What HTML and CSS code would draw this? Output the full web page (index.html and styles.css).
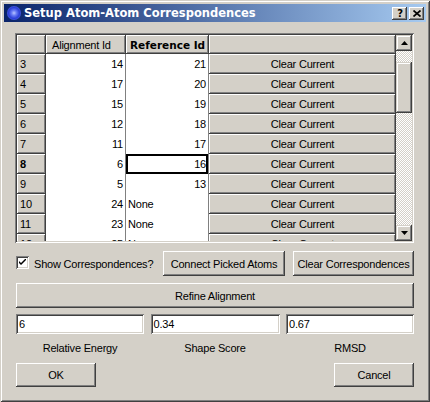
FILE: index.html
```html
<!DOCTYPE html>
<html>
<head>
<meta charset="utf-8">
<link rel="stylesheet" href="styles.css">
</head>
<body>
<div class="win">
  <div class="titlebar">
    <span class="ticon"></span>
    <span class="ttext">Setup Atom-Atom Correspondences</span>
    <span class="tbtns">
      <span class="tbtn help">?</span>
      <span class="tbtn close"><svg width="8" height="7" viewBox="0 0 8 7"><path d="M0.5 0.5 L7.5 6.5 M7.5 0.5 L0.5 6.5" stroke="#000" stroke-width="1.7" fill="none"/></svg></span>
    </span>
  </div>
  <div class="content">
    <div class="gridframe">
      <div class="table">
        <div class="row head">
          <div class="rh"></div>
          <div class="ch">Alignment Id</div>
          <div class="ch bold">Reference Id</div>
          <div class="ch"></div>
        </div>
        <div class="row"><div class="rh">3</div><div class="c num">14</div><div class="c num">21</div><div class="bc">Clear Current</div></div>
        <div class="row"><div class="rh">4</div><div class="c num">17</div><div class="c num">20</div><div class="bc">Clear Current</div></div>
        <div class="row"><div class="rh">5</div><div class="c num">15</div><div class="c num">19</div><div class="bc">Clear Current</div></div>
        <div class="row"><div class="rh">6</div><div class="c num">12</div><div class="c num">18</div><div class="bc">Clear Current</div></div>
        <div class="row"><div class="rh">7</div><div class="c num">11</div><div class="c num">17</div><div class="bc">Clear Current</div></div>
        <div class="row"><div class="rh bold">8</div><div class="c num">6</div><div class="c num sel">16</div><div class="bc">Clear Current</div></div>
        <div class="row"><div class="rh">9</div><div class="c num">5</div><div class="c num">13</div><div class="bc">Clear Current</div></div>
        <div class="row"><div class="rh">10</div><div class="c num">24</div><div class="c txt">None</div><div class="bc">Clear Current</div></div>
        <div class="row"><div class="rh">11</div><div class="c num">23</div><div class="c txt">None</div><div class="bc">Clear Current</div></div>
        <div class="row"><div class="rh">12</div><div class="c num">25</div><div class="c txt">None</div><div class="bc">Clear Current</div></div>
      </div>
      <div class="vscroll">
        <div class="sbtn"><svg width="7" height="4" viewBox="0 0 7 4"><polygon points="3.5,0 7,4 0,4" fill="#000"/></svg></div>
        <div class="gap1"></div>
        <div class="thumb"></div>
        <div class="gap2"></div>
        <div class="sbtn"><svg width="7" height="4" viewBox="0 0 7 4"><polygon points="0,0 7,0 3.5,4" fill="#000"/></svg></div>
      </div>
    </div>

    <div class="ctlrow">
      <label class="check">
        <span class="cbox"><svg width="7" height="7" viewBox="0 0 7 7"><path d="M0 2 L0 4 L2 6 L7 1 L7 -1 L2 4 Z" fill="#000"/></svg></span>
        <span>Show Correspondences?</span>
      </label>
      <div class="btn connect">Connect Picked Atoms</div>
      <div class="btn clearc">Clear Correspondences</div>
    </div>

    <div class="btn refine">Refine Alignment</div>

    <div class="fields">
      <div class="field">6</div>
      <div class="field">0.34</div>
      <div class="field">0.67</div>
    </div>
    <div class="labels">
      <div>Relative Energy</div>
      <div>Shape Score</div>
      <div>RMSD</div>
    </div>

    <div class="bottom">
      <div class="btn dlg">OK</div>
      <div class="btn dlg">Cancel</div>
    </div>
  </div>
</div>
</body>
</html>
```
FILE: styles.css
```css
* { box-sizing: border-box; }
html, body { margin: 0; padding: 0; }
body {
  width: 430px;
  height: 402px;
  overflow: hidden;
  background: #d4d0c8;
  font-family: "Liberation Sans", Arial, sans-serif;
  font-size: 11px;
  letter-spacing: -0.2px;
  color: #000;
}
.win {
  width: 430px;
  height: 402px;
  padding: 4px;
  background: #d4d0c8;
  box-shadow: inset 1px 1px #d4d0c8, inset -1px -1px #404040, inset 2px 2px #fff, inset -2px -2px #808080;
  display: flex;
  flex-direction: column;
}
.titlebar {
  height: 18px;
  background: linear-gradient(to right, #0a246a, #a6caf0);
  display: flex;
  align-items: center;
  padding: 0 2px 0 3px;
  flex: none;
}
.ticon {
  width: 14px;
  height: 14px;
  border-radius: 50%;
  background: radial-gradient(circle at 50% 50%, #b8c4ff 0, #6a7cf4 25%, #2c3fd8 55%, #4a5ce0 75%, rgba(90,110,220,0.3) 100%);
  flex: none;
}
.ttext {
  margin-left: 3px;
  color: #fff;
  font-family: "DejaVu Sans", Verdana, sans-serif;
  font-weight: bold;
  font-size: 11.5px;
  letter-spacing: 0;
  flex: 1;
  white-space: nowrap;
}
.tbtns { display: flex; gap: 2px; }
.tbtn {
  width: 15px;
  height: 13px;
  background: #d4d0c8;
  box-shadow: inset -1px -1px #404040, inset 1px 1px #fff, inset -2px -2px #808080, inset 2px 2px #d4d0c8;
  display: flex;
  align-items: center;
  justify-content: center;
}
.tbtn.help {
  font-family: "DejaVu Sans", sans-serif;
  font-weight: bold;
  font-size: 10px;
  line-height: 13px;
  padding-left: 1px;
}

.content {
  flex: 1;
  display: flex;
  flex-direction: column;
  padding: 11px 12px 0 11px;
}
.gridframe {
  height: 210px;
  padding: 2px;
  display: flex;
  background: #d4d0c8;
  box-shadow: inset 1px 1px #808080, inset -1px -1px #fff, inset 2px 2px #404040, inset -2px -2px #d4d0c8;
}
.table {
  width: 379px;
  height: 206px;
  overflow: hidden;
  background: #fff;
}
.row {
  display: grid;
  grid-template-columns: 29px 80px 83px 187px;
  height: 20px;
}
.row.head { height: 19px; }
.rh, .ch, .bc {
  background: #d4d0c8;
  box-shadow: inset -1px -1px #404040, inset 1px 1px #fff, inset -2px -2px #808080, inset 2px 2px #d4d0c8;
  display: flex;
  align-items: center;
  white-space: nowrap;
}
.rh { padding-left: 3px; }
.ch { padding-left: 6px; }
.ch.bold {
  font-family: "DejaVu Sans", Verdana, sans-serif;
  font-weight: bold;
  font-size: 10.5px;
  letter-spacing: 0;
  padding-left: 4px;
}
.bold { font-weight: bold; }
.bc { justify-content: center; }
.c {
  background: #fff;
  border-right: 1px solid #808080;
  display: flex;
  align-items: center;
}
.c.num { justify-content: flex-end; padding-right: 2px; }
.c.txt { padding-left: 2px; }
.c.sel { box-shadow: inset 0 0 0 2px #000; padding-right: 2px; }

.vscroll {
  width: 16px;
  height: 206px;
  display: flex;
  flex-direction: column;
  background: repeating-conic-gradient(#fff 0 25%, #d4d0c8 0 50%) 0 0 / 2px 2px;
}
.sbtn {
  height: 16px;
  flex: none;
  background: #d4d0c8;
  box-shadow: inset -1px -1px #404040, inset 1px 1px #d4d0c8, inset -2px -2px #808080, inset 2px 2px #fff;
  display: flex;
  align-items: center;
  justify-content: center;
}
.gap1 { height: 11px; flex: none; }
.thumb {
  height: 51px;
  flex: none;
  background: #d4d0c8;
  box-shadow: inset -1px -1px #404040, inset 1px 1px #d4d0c8, inset -2px -2px #808080, inset 2px 2px #fff;
}
.gap2 { flex: 1; }

.btn {
  background: #d4d0c8;
  box-shadow: inset -1px -1px #404040, inset 1px 1px #fff, inset -2px -2px #808080, inset 2px 2px #d4d0c8;
  display: flex;
  align-items: center;
  justify-content: center;
  white-space: nowrap;
}
.ctlrow {
  margin-top: 8px;
  height: 25px;
  display: flex;
  align-items: center;
  padding-left: 1px;
}
.check {
  display: flex;
  align-items: center;
  gap: 5px;
  width: 147px;
}
.cbox {
  width: 13px;
  height: 13px;
  background: #fff;
  box-shadow: inset 1px 1px #808080, inset -1px -1px #fff, inset 2px 2px #404040, inset -2px -2px #d4d0c8;
  display: flex;
  align-items: center;
  justify-content: center;
  margin-top: -2px;
}
.connect { width: 122px; height: 25px; }
.clearc { width: 121px; height: 25px; margin-left: 8px; }
.refine {
  margin-top: 7px;
  margin-left: 1px;
  height: 25px;
}
.fields {
  margin-top: 6px;
  margin-left: 1px;
  display: grid;
  grid-template-columns: 128px 129px 128px;
  justify-content: space-between;
}
.field {
  height: 20px;
  background: #fff;
  box-shadow: inset 1px 1px #808080, inset -1px -1px #fff, inset 2px 2px #404040, inset -2px -2px #d4d0c8;
  padding-left: 3px;
  display: flex;
  align-items: center;
}
.labels {
  margin-top: 8px;
  margin-left: 1px;
  display: grid;
  grid-template-columns: 128px 129px 128px;
  justify-content: space-between;
  text-align: center;
  height: 13px;
  line-height: 13px;
}
.bottom {
  margin-top: 8px;
  margin-left: 1px;
  display: flex;
  justify-content: space-between;
}
.dlg { width: 80px; height: 24px; }
```
